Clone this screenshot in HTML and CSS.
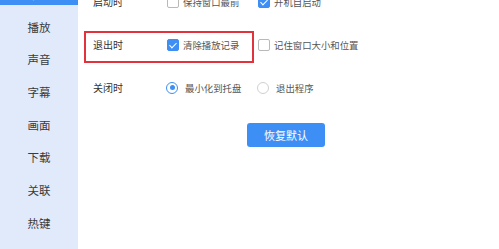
FILE: index.html
```html
<!DOCTYPE html>
<html lang="zh-CN">
<head>
<meta charset="UTF-8" />
<meta name="viewport" content="width=device-width, initial-scale=1" />
<title>设置</title>
<link rel="stylesheet" href="styles.css">
</head>
<body>
  <div class="app">
    <nav class="side">
      <a href="#" class="item active">常规</a>
      <a href="#" class="item">播放</a>
      <a href="#" class="item">声音</a>
      <a href="#" class="item">字幕</a>
      <a href="#" class="item">画面</a>
      <a href="#" class="item">下载</a>
      <a href="#" class="item">关联</a>
      <a href="#" class="item">热键</a>
    </nav>

    <main class="content">
      <div class="row">
        <span class="label">启动时</span>
        <label class="opt"><span class="box"></span>保持窗口最前</label>
        <label class="opt"><span class="box checked"></span>开机自启动</label>
      </div>

      <div class="row highlight">
        <span class="label">退出时</span>
        <label class="opt"><span class="box checked"></span>清除播放记录</label>
        <label class="opt"><span class="box"></span>记住窗口大小和位置</label>
        <span class="mark"></span>
      </div>

      <div class="row">
        <span class="label">关闭时</span>
        <label class="opt radio-opt"><span class="radio on"></span>最小化到托盘</label>
        <label class="opt radio-opt"><span class="radio"></span>退出程序</label>
      </div>

      <button class="resetBtn">恢复默认</button>
    </main>
  </div>
</body>
</html>
```

FILE: styles.css
```css
body {
  margin: 0;
  background: #fff;
  color: #333;
  font-family: "Noto Sans CJK SC", "Noto Sans", sans-serif;
  overflow: hidden;
}
.app {
  display: flex;
  height: 249px;
}
.side {
  width: 78px;
  flex-shrink: 0;
  background: #e0eafb;
  display: flex;
  flex-direction: column;
  gap: 10.67px;
  margin-top: -17px;
  padding-bottom: 17px;
}
.side .item {
  height: 22px;
  line-height: 22px;
  text-align: center;
  font-size: 11.5px;
  color: #3a3a3a;
  text-decoration: none;
}
.side .item.active {
  background: #3d8ff5;
  color: #fff;
}
.content {
  flex: 1;
  padding-left: 15px;
  margin-top: -20px;
}
.row {
  position: relative;
  display: flex;
  align-items: center;
  height: 43px;
}
.label {
  width: 74px;
  font-size: 10px;
  color: #333;
}
.opt {
  display: flex;
  align-items: center;
  gap: 4px;
  width: 91px;
  font-size: 9.4px;
  color: #555;
  white-space: nowrap;
}
.opt:last-of-type {
  width: auto;
}
.radio-opt {
  gap: 7px;
}
.box {
  width: 10px;
  height: 10px;
  border: 1px solid #b9b9b9;
  border-radius: 2px;
  background: #fff;
  position: relative;
}
.box.checked {
  background: #3d8ff5;
  border-color: #3d8ff5;
}
.box.checked::after {
  content: "";
  position: absolute;
  left: 3px;
  top: 1px;
  width: 3px;
  height: 6px;
  border: solid #fff;
  border-width: 0 1.5px 1.5px 0;
  transform: rotate(45deg);
}
.radio {
  width: 10px;
  height: 10px;
  border: 1px solid #d0d0d0;
  border-radius: 50%;
  position: relative;
  margin-left: -1px;
}
.radio.on {
  border-color: #3d8ff5;
}
.radio.on::after {
  content: "";
  position: absolute;
  left: 2.5px;
  top: 2.5px;
  width: 5px;
  height: 5px;
  border-radius: 50%;
  background: #3d8ff5;
}
.mark {
  position: absolute;
  left: -9px;
  top: 8px;
  width: 166px;
  height: 28px;
  border: 2px solid #e2333c;
}
.resetBtn {
  display: block;
  margin: 14px 0 0 154px;
  width: 78px;
  height: 24px;
  border: none;
  border-radius: 3px;
  background: #3d8ff5;
  color: #fff;
  font-family: inherit;
  font-size: 11px;
  cursor: pointer;
}
```
